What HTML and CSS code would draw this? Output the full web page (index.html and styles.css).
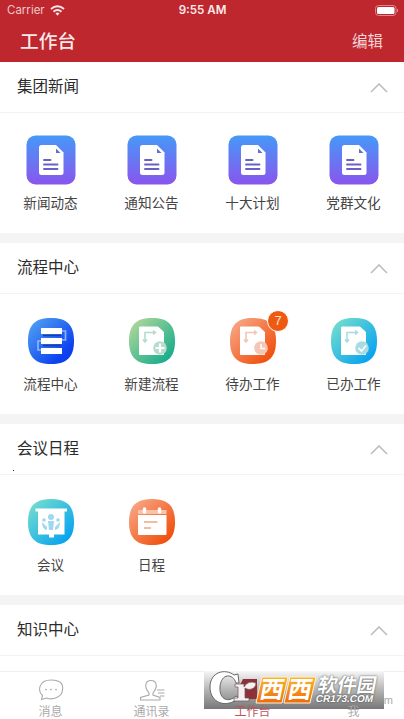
FILE: index.html
```html
<!DOCTYPE html>
<html lang="zh-CN">
<head>
<meta charset="utf-8">
<title>工作台</title>
<link rel="stylesheet" href="styles.css">
</head>
<body>
<svg class="defs" width="0" height="0" aria-hidden="true">
  <defs>
    <linearGradient id="violet" x1="0" y1="0" x2="0" y2="1"><stop offset="0" stop-color="#4599f8"/><stop offset="1" stop-color="#8a55ee"/></linearGradient>
    <linearGradient id="blue" x1="0" y1="0" x2="1" y2="1"><stop offset="0.1" stop-color="#4c9bf2"/><stop offset="0.8" stop-color="#0b3ff0"/></linearGradient>
    <linearGradient id="green" x1="0" y1="0" x2="1" y2="1"><stop offset="0.05" stop-color="#b3d99a"/><stop offset="0.9" stop-color="#15ab8b"/></linearGradient>
    <linearGradient id="orange" x1="0" y1="0" x2="1" y2="1"><stop offset="0.05" stop-color="#f7a98a"/><stop offset="0.85" stop-color="#f15210"/></linearGradient>
    <linearGradient id="cyan" x1="0" y1="0" x2="1" y2="1"><stop offset="0.05" stop-color="#77dfcd"/><stop offset="0.85" stop-color="#0ba5ee"/></linearGradient>
    <linearGradient id="gold" x1="0" y1="0" x2="0" y2="1"><stop offset="0" stop-color="#fdb52a"/><stop offset="1" stop-color="#ee6b0c"/></linearGradient>
    <path id="squircle" d="M25 2C41 2 48 9 48 25S41 48 25 48 2 41 2 25 9 2 25 2Z"/>
    <g id="article">
      <rect x=".5" y=".5" width="49" height="49" rx="9" fill="url(#violet)"/>
      <path d="M15.500 10H30L37.500 17.500V37.500Q37.500 40 35 40H15.500Q13 40 13 37.500V12.500Q13 10 15.500 10Z" fill="#fff"/>
      <path d="M30 13.500V18H34.500Z" fill="#5b72ce"/>
      <path d="M18 25H24.500M18 29.500H31.500M18 34H31.500" stroke="#6960c5" stroke-width="1.900" stroke-linecap="round"/>
    </g>
    <g id="flow-sheet">
      <path d="M12.500 11H31L36.500 16V38.500H12.500Z" fill="#fff" stroke="#fff" stroke-linejoin="round"/>
      <path d="M18 26V16.500H28M16 23.500L18 26L20 23.500M26 14.500L28.500 16.500L26 18.500" fill="none" stroke="currentColor" stroke-width="1.600"/>
      <circle cx="33" cy="32" r="6.800" fill="currentColor"/>
    </g>
    <path id="chevron" d="M1 9L9 1L17 9"/>
  </defs>
</svg>
<header class="top">
  <div class="status">
    <span class="carrier">Carrier
      <svg width="15" height="11" viewBox="0 0 15 11" fill="none" stroke="#fbe9ea" stroke-width="2"><path d="M1 4Q7.500-1.500 14 4M3.500 6.700Q7.500 3.300 11.500 6.700"/><path d="M5.500 8.300Q7.500 6.700 9.500 8.300L7.500 10.700Z" fill="#fbe9ea" stroke="none"/></svg>
    </span>
    <b class="clock">9:55 AM</b>
    <svg class="battery" width="24" height="11" viewBox="0 0 24 11"><rect x=".5" y=".5" width="20.500" height="10" rx="3" fill="none" stroke="#dd858a"/><rect x="2" y="2" width="17.500" height="7" rx="1.500" fill="#fff"/><path d="M22.500 4V7" stroke="#dd858a"/></svg>
  </div>
  <div class="nav"><h1>工作台</h1><a>编辑</a></div>
</header>
<main>
  <section>
    <div class="head"><h2>集团新闻</h2><svg class="chev" viewBox="0 0 18 10"><use href="#chevron"/></svg></div>
    <div class="grid">
      <div class="app"><svg viewBox="0 0 50 50"><use href="#article"/></svg><span>新闻动态</span></div>
      <div class="app"><svg viewBox="0 0 50 50"><use href="#article"/></svg><span>通知公告</span></div>
      <div class="app"><svg viewBox="0 0 50 50"><use href="#article"/></svg><span>十大计划</span></div>
      <div class="app"><svg viewBox="0 0 50 50"><use href="#article"/></svg><span>党群文化</span></div>
    </div>
  </section>
  <section>
    <div class="head"><h2>流程中心</h2><svg class="chev" viewBox="0 0 18 10"><use href="#chevron"/></svg></div>
    <div class="grid">
      <div class="app"><svg viewBox="0 0 50 50"><use href="#squircle" fill="url(#blue)"/><path d="M36 15H39.500V24H36M15 25H12V34H15" fill="none" stroke="#8fb2fb" stroke-width="1.700"/><path d="M17 19.500H35M17 29.500H35" stroke="#183fa9" stroke-width="1.500"/><path d="M15 12H36V18H15ZM15 22H36V28H15ZM15 32H36V38H15Z" fill="#fff"/></svg><span>流程中心</span></div>
      <div class="app mint"><svg viewBox="0 0 50 50"><use href="#squircle" fill="url(#green)"/><use href="#flow-sheet"/><path d="M33 27.500V36.500M28.500 32H37.500" stroke="#fff" stroke-width="2.200"/></svg><span>新建流程</span></div>
      <div class="app peach"><svg viewBox="0 0 50 50"><use href="#squircle" fill="url(#orange)"/><use href="#flow-sheet"/><path d="M33 28V32.500H37" fill="none" stroke="#fff" stroke-width="1.600"/></svg><i class="badge">7</i><span>待办工作</span></div>
      <div class="app aqua"><svg viewBox="0 0 50 50"><use href="#squircle" fill="url(#cyan)"/><use href="#flow-sheet"/><path d="M29.500 32L32.500 35L37 29.500" fill="none" stroke="#fff" stroke-width="1.700"/></svg><span>已办工作</span></div>
    </div>
  </section>
  <section>
    <div class="head"><h2>会议日程</h2><svg class="chev" viewBox="0 0 18 10"><use href="#chevron"/></svg></div>
    <div class="grid">
      <div class="app"><svg viewBox="0 0 50 50"><use href="#squircle" fill="url(#cyan)"/><path d="M9.500 11.500H41V14.500H38.500V37.500H28V40.500H23V37.500H12V14.500H9.500Z" fill="#fff"/><g fill="#9fd8ef"><circle cx="25" cy="20" r="3"/><circle cx="18" cy="23" r="1.800"/><circle cx="32" cy="23" r="1.800"/><path d="M22 24H28L27 33H23ZM16 25L21 30V33Q16 32 16 25ZM34 25L29 30V33Q34 32 34 25Z"/></g></svg><span>会议</span></div>
      <div class="app"><svg viewBox="0 0 50 50"><use href="#squircle" fill="url(#orange)"/><path d="M11 18H39.500V37Q39.500 38 38.500 38H12Q11 38 11 37Z" fill="#fff"/><path d="M11 13H39.500V17H11Z" fill="#fac2a8"/><path d="M17.500 12V15M32.500 12V15" stroke="#fff" stroke-width="3.500" stroke-linecap="round"/><path d="M17 25H30.500M17 31H24" stroke="#f9b99c" stroke-width="1.800"/></svg><span>日程</span></div>
    </div>
  </section>
  <section>
    <div class="head"><h2>知识中心</h2><svg class="chev" viewBox="0 0 18 10"><use href="#chevron"/></svg></div>
  </section>
</main>
<i class="speck"></i>
<nav class="tabs">
  <div class="tab"><svg viewBox="0 0 26 22"><path d="M3.500 20.500L4.500 16.500C-.500 12 .5 1 13 1S25 8 24.500 11C24 18 15 21.500 8.500 19Z"/><path d="M8 10.500H8.100M13 10.500H13.100M18 10.500H18.100" stroke-width="1.700" stroke-linecap="round"/></svg><span>消息</span></div>
  <div class="tab"><svg viewBox="0 0 26 22"><path d="M10 14C5 8 6 1.500 12 1.500S19 8 14 14V16L21 18.500V21H1.500V18.500L10 16ZM18 11H25.500M19 14H25.500M21 17H25.500"/></svg><span>通讯录</span></div>
  <div class="tab on"><svg viewBox="0 0 26 22"><path d="M3 1H23V21H3Z"/></svg><span>工作台</span></div>
  <div class="tab"><svg viewBox="0 0 26 22"><path d="M9 12C5 7 8 1 13 1S21 7 17 12L24 17V20H2V17Z"/></svg><span>我</span></div>
</nav>
<div class="underprint">.com</div>
<div class="stamp">
  <svg viewBox="0 0 180 38">
    <path d="M39 8H53V28H35V16Z" fill="#8d3138"/>
    <path d="M34 3L35 12H32C29 2 17 2 16 16C15 29 25 32 32 25L35 27C22 38 6 32 6 16C6 1 21-3 30 4Z" fill="#fff" stroke="#666" stroke-width="1"/>
    <path d="M31 13H40V16Q44 9 52 12C52 18 45 20 41 17V27H45V30H30V27H34V16H31Z" fill="#f5efef" stroke="#6e5558" stroke-width=".7"/>
    <path d="M58 6H84L78 32H52ZM86 6H112L106 32H80Z" fill="url(#gold)" stroke="#fff2d7" stroke-width="1"/>
  </svg>
  <span class="xi x1">西</span><span class="xi x2">西</span>
  <span class="soft">软件园</span><span class="site">CR173.COM</span>
</div>
</body>
</html>
```

FILE: styles.css
```css
* { box-sizing: border-box; }
body {
  margin: 0;
  width: 404px;
  height: 719px;
  overflow: hidden;
  position: relative;
  display: flex;
  flex-direction: column;
  background: #f4f4f4;
  color: #333;
  font-family: "Liberation Sans", "Noto Sans CJK SC", sans-serif;
}
.defs { position: absolute; }
h1, h2 { margin: 0; font-weight: 400; }
i { font-style: normal; }

.top { height: 62px; flex: none; background: #bd272d; color: #fbe9ea; }
.status {
  height: 20px;
  padding: 0 5px 0 7px;
  display: grid;
  grid-template-columns: 1fr auto 1fr;
  align-items: center;
  font: 11.5px/20px Inter, sans-serif;
}
.carrier { display: flex; align-items: center; gap: 5px; color: #f0c9cb; }
.clock { font-weight: 600; font-size: 11.6px; margin-right: 1px; }
.battery { justify-self: end; }
.nav { height: 40px; padding: 0 21px 0 20px; display: flex; justify-content: space-between; align-items: center; }
.nav h1 { font-size: 18.700px; line-height: 28px; padding-top: 4px; font-weight: 500; }
.nav a { font-size: 15.500px; color: #f5d5d7; }

main { flex: 1; min-height: 0; overflow: hidden; display: flex; flex-direction: column; gap: 10px; }
section { height: 171px; flex: none; background: #fff; }
.head {
  height: 51px;
  padding: 0 16px 0 17px;
  display: flex;
  align-items: center;
  justify-content: space-between;
  border-bottom: 1px solid #f3f3f3;
}
.head h2 { font-size: 15.500px; line-height: 22px; color: #2b2b2b; }
.chev { width: 18px; height: 10px; margin-top: 2px; fill: none; stroke: #bdbdbd; stroke-width: 1.600; }
.grid { display: grid; grid-template-columns: repeat(4, 101px); padding-top: 21.5px; }
.app { display: flex; position: relative; flex-direction: column; align-items: center; gap: 9.5px; }
.app svg { width: 50px; height: 50px; }
.app span { font-size: 13.600px; line-height: 20px; color: #444; }
.mint { color: #b5dccd; }
.peach { color: #f5c5b5; }
.aqua { color: #a8dce3; }
.badge {
  position: absolute;
  left: 65px;
  top: -6px;
  width: 22px;
  height: 22px;
  border-radius: 50%;
  background: #ee5a10;
  border: 1px solid #fff;
  color: #fde0d0;
  font: 13px/20px "Liberation Sans", sans-serif;
  text-align: center;
}
.speck { position: absolute; left: 13px; top: 470px; width: 1px; height: 1px; background: #222; }

.tabs { height: 48px; flex: none; display: grid; grid-template-columns: repeat(4, 101px); background: #fff; border-top: 1px solid #f0f0f0; }
.tab { display: flex; flex-direction: column; align-items: center; padding-top: 7px; color: #aaa; font-size: 12px; }
.tab svg { width: 26px; height: 22px; fill: none; stroke: currentColor; stroke-width: 1.100; }
.tab span { position: relative; z-index: 2; line-height: 18px; margin-top: 2px; }
.on { color: #bc555b; }

.underprint { position: absolute; left: 369px; top: 694px; font-size: 11px; color: #aaa; }
.stamp { position: absolute; left: 204px; top: 671px; width: 180px; height: 38px; background: linear-gradient(#f7f7f7, #b4b4b4 50%, #777); }
.stamp svg { display: block; width: 180px; height: 38px; }
.stamp span { position: absolute; color: #fff; white-space: nowrap; transform: skewX(-11deg); }
.xi { top: 7px; font-size: 24px; line-height: 24px; font-weight: 700; }
.x1 { left: 56px; }
.x2 { left: 84px; }
.soft { left: 114px; top: 4px; font-size: 19.500px; line-height: 21px; font-weight: 700; text-shadow: 0 0 2px #444; }
.site { left: 112px; top: 22px; font-size: 10px; line-height: 11px; font-weight: 700; text-shadow: 0 0 2px #333; }
```
